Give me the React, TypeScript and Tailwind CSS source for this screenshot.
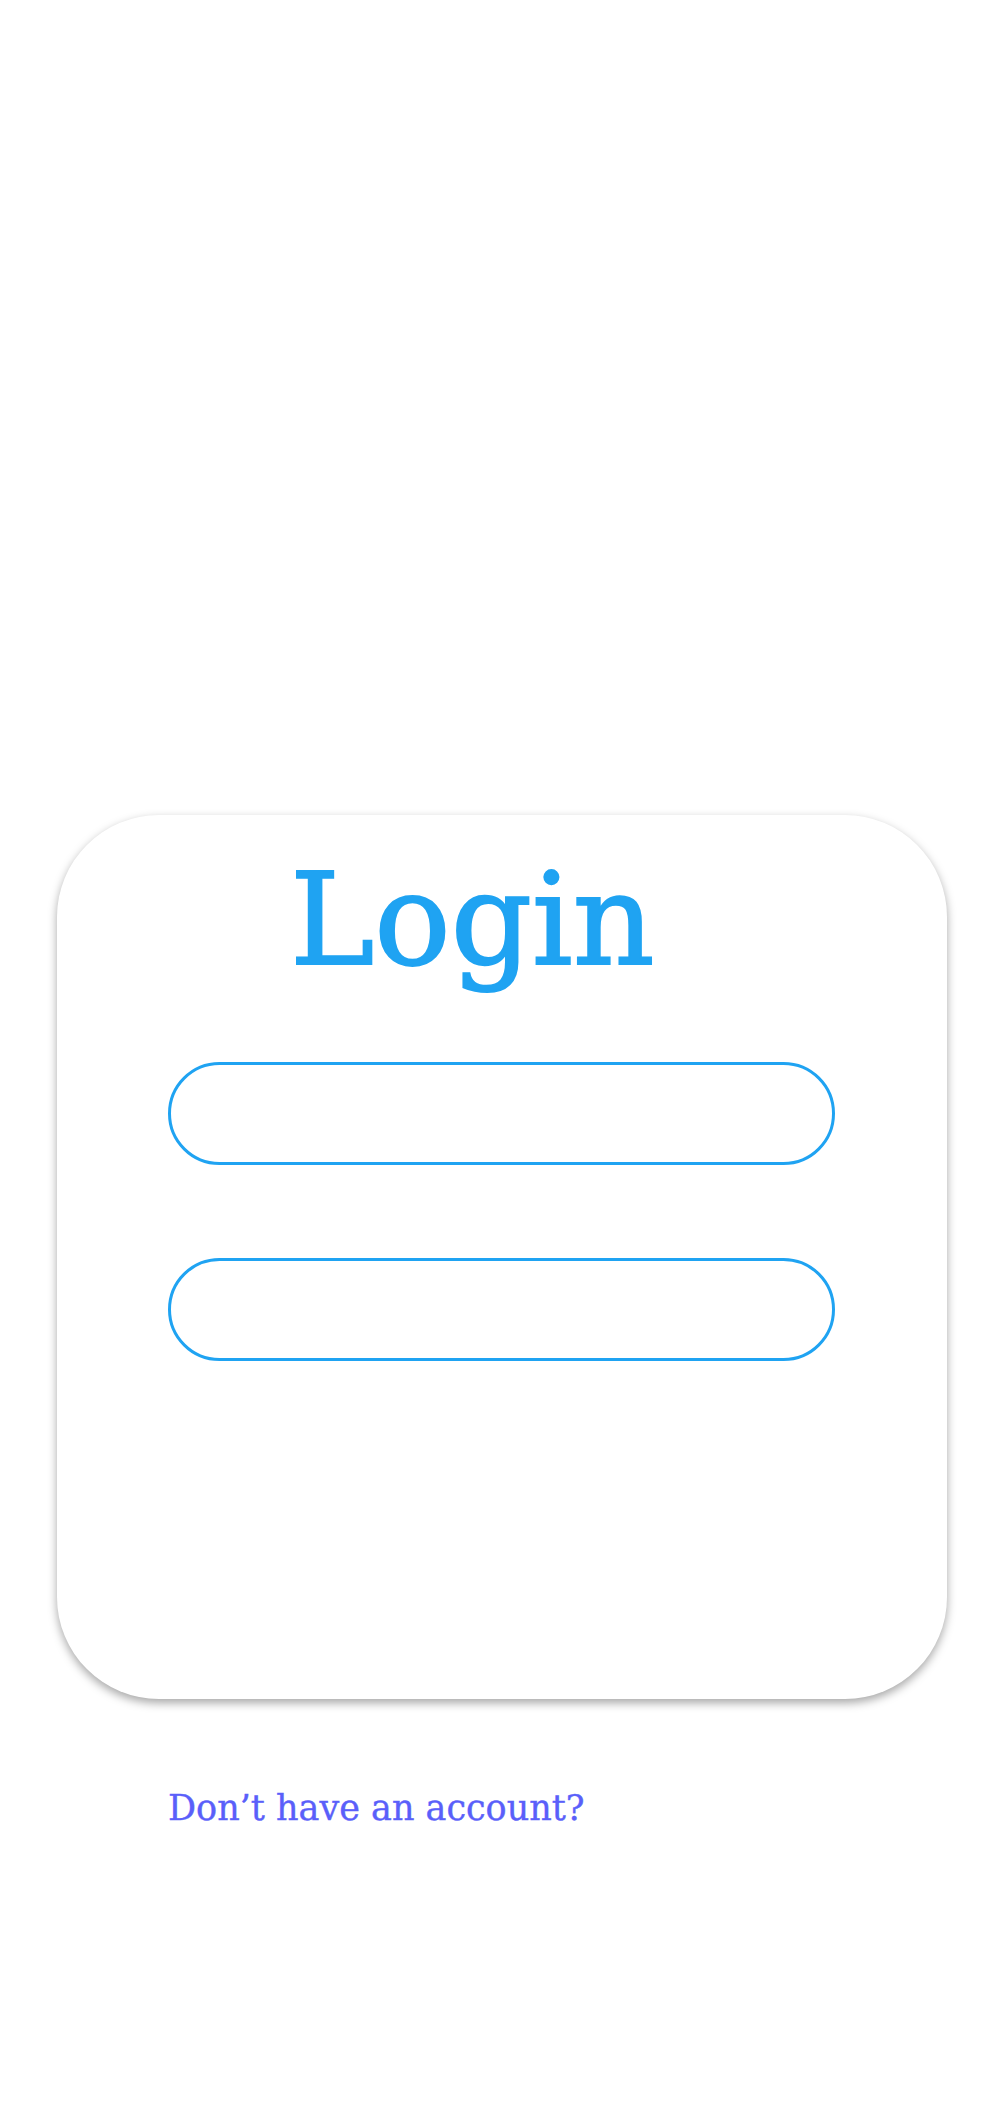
export default function App() {
  return (
    <div className="min-h-[2123px] bg-white pt-[815px] font-['DejaVu_Serif',serif]">
      {/* Login card */}
      <div className="ml-[57px] w-[890px] h-[884px] rounded-[102px] bg-white shadow-[0_4px_10px_rgba(0,0,0,0.35)] pt-[42px]">
        <h1 className="pl-[233px] text-[127px] leading-none text-[#1fa3f2] [-webkit-text-stroke:2px_#1fa3f2]">
          Login
        </h1>
        <div className="mt-[78px] ml-[111px] flex flex-col gap-[93px]">
          <input
            type="text"
            className="w-[667px] h-[103px] rounded-full border-[3px] border-[#1fa3f2] bg-white px-12 outline-none"
          />
          <input
            type="password"
            className="w-[667px] h-[103px] rounded-full border-[3px] border-[#1fa3f2] bg-white px-12 outline-none"
          />
        </div>
      </div>

      <div className="mt-[92px] pl-[168px]">
        <a href="#" className="text-[35px] leading-none text-[#5a5ffa] [-webkit-text-stroke:0.4px_#5a5ffa]">
          Don’t have an account?
        </a>
      </div>
    </div>
  );
}
